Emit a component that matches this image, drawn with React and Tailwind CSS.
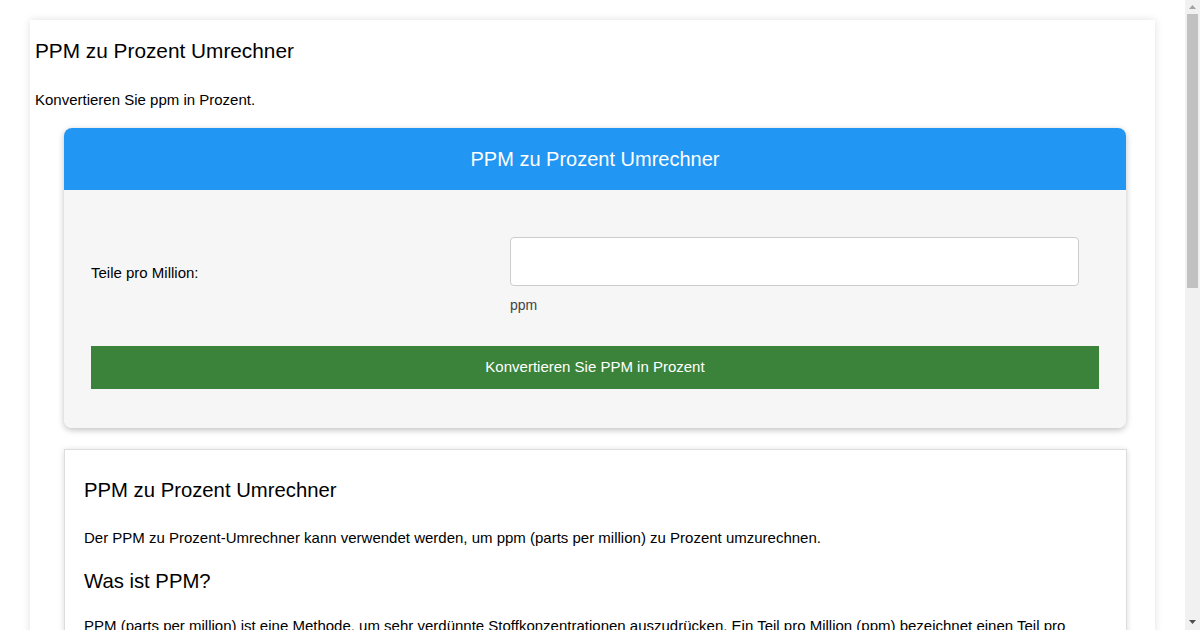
export default function App() {
  return (
    <div className="flex h-screen overflow-hidden bg-white" style={{ fontFamily: '"Liberation Sans", Arial, sans-serif' }}>
      <div className="flex-1 pt-[20px] pb-[40px]">
        <div className="ml-[30px] mr-[30px] bg-white shadow-[0_0_8px_rgba(0,0,0,0.12)] pb-[40px]">
          <h1 className="text-[20.8px] leading-[24px] text-black px-[5px] pt-[19px] m-0 font-normal">PPM zu Prozent Umrechner</h1>
          <p className="text-[15px] leading-[17px] text-black px-[5px] mt-[28px]">Konvertieren Sie ppm in Prozent.</p>
          <div className="ml-[34px] mr-[29px] mt-[20px] rounded-[8px] overflow-hidden shadow-[0_2px_6px_rgba(0,0,0,0.25)]">
            <div className="bg-[#2196f3] h-[62px] flex items-center justify-center text-white text-[20px]">PPM zu Prozent Umrechner</div>
            <div className="bg-[#f6f6f6] px-[27px] pt-[47px] pb-[39px]">
              <div className="flex">
                <div className="w-[419px] pt-[27px] text-[15px] leading-[17px] text-black">Teile pro Million:</div>
                <div className="w-[569px]">
                  <input className="block w-full h-[49px] bg-white border border-[#cccccc] rounded-[4px] outline-none px-3" />
                  <div className="mt-[11px] text-[14px] leading-[16px] text-[#444]">ppm</div>
                </div>
              </div>
              <button className="mt-[33px] w-full h-[43px] bg-[#3b833a] text-white text-[15px] flex items-center justify-center">Konvertieren Sie PPM in Prozent</button>
            </div>
          </div>
          <div className="ml-[34px] mr-[28px] mt-[21px] border border-[#dddddd] bg-white shadow-[0_1px_6px_rgba(0,0,0,0.15)] px-[19px] pt-[28px] pb-[30px]">
            <h2 className="text-[20.3px] leading-[24px] text-black font-normal">PPM zu Prozent Umrechner</h2>
            <p className="text-[15px] leading-[17px] text-black mt-[27px]">Der PPM zu Prozent-Umrechner kann verwendet werden, um ppm (parts per million) zu Prozent umzurechnen.</p>
            <h2 className="text-[20.3px] leading-[24px] text-black font-normal mt-[23px]">Was ist PPM?</h2>
            <p className="text-[15px] leading-[22px] text-black mt-[22px]">PPM (parts per million) ist eine Methode, um sehr verdünnte Stoffkonzentrationen auszudrücken. Ein Teil pro Million (ppm) bezeichnet einen Teil pro Million Teile, also 0,0001 Prozent. Diese Einheit wird häufig in der Chemie, Umweltwissenschaft und Wasseraufbereitung verwendet.</p>
          </div>
        </div>
      </div>
      <div className="w-[15px] h-full bg-[#f1f1f1] flex flex-col items-center shrink-0">
        <div className="h-[14px] w-full flex items-center justify-center">
          <svg width="7" height="4" viewBox="0 0 7 4"><path d="M0 4 L3.5 0 L7 4 Z" fill="#a3a3a3" /></svg>
        </div>
        <div className="w-[11px] h-[274px] bg-[#c1c1c1]"></div>
        <div className="flex-1"></div>
        <div className="h-[16px] w-full flex items-center justify-center">
          <svg width="7" height="4" viewBox="0 0 7 4"><path d="M0 0 L7 0 L3.5 4 Z" fill="#505050" /></svg>
        </div>
      </div>
    </div>
  );
}
